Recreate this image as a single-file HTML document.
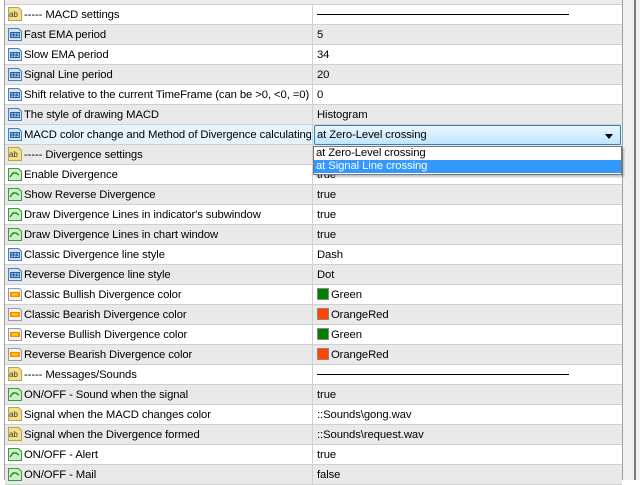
<!DOCTYPE html>
<html><head><style>
*{margin:0;padding:0;box-sizing:border-box}
body{width:640px;height:480px;overflow:hidden;background:#fff;font-family:"Liberation Sans",sans-serif;font-size:11.3px;letter-spacing:-0.1px;color:#000;position:relative}
#tbl{position:absolute;left:4px;top:0;width:618px;height:480px;border-left:1px solid #a0a0a0}
.top{height:5px;background:#ececec;border-bottom:1px solid #d0d0d0}
.r{position:relative;height:20px;border-bottom:1px solid #d0d0d0;background:#fff;line-height:19px}
.r.g{background:#e9e9e9}
.r .l{position:absolute;left:19px;top:1px;white-space:nowrap;width:287px;overflow:hidden}
.r .v{position:absolute;left:307px;top:0;bottom:0;right:0;border-left:1px solid #d0d0d0;padding:1px 0 0 4px;white-space:nowrap}
.ic{position:absolute;left:2px;top:1px;width:16px;height:16px;display:block}
.sep{position:absolute;left:4px;top:9px;width:252px;height:1px;background:#000}
.sw{display:inline-block;width:12px;height:12px;border:1px solid #888;vertical-align:-2px;margin-right:2px}
#sb1{position:absolute;left:622px;top:0;width:12px;height:480px;background:#f0f0f0;border-left:1px solid #a0a0a0}
#sb2{position:absolute;left:634px;top:0;width:6px;height:480px;background:#f0f0f0;border-left:2px solid #7a7a7a}
#combo{position:absolute;left:314px;top:125px;width:307px;height:20px;border:1px solid #3c7fb1;border-radius:2px;background:linear-gradient(#eaf6fd,#bee6fd);padding:0 0 0 2px;line-height:18px}
#combo:after{content:"";position:absolute;right:7px;top:8px;border:4px solid transparent;border-top:5px solid #000;border-bottom:0}
#dd{position:absolute;left:313px;top:146px;width:309px;height:29px;background:#fff;border:1px solid #777;box-shadow:2px 2px 2px rgba(0,0,0,.25)}
#dd div{height:13px;line-height:13px;padding-left:2px}
#dd .s{background:#3399ff;color:#fff}
</style></head><body>
<svg width="0" height="0" style="position:absolute">
<defs>
<g id="ab"><path d="M1.5 1.5h10l3 3v10h-13z" fill="#f3e08c" stroke="#b8a24a"/><text x="2" y="11" font-size="8" font-family="Liberation Sans" fill="#333">ab</text></g>
<g id="n"><path d="M1.5 2.5h10l3 3v9h-13z" fill="#cfe3f7" stroke="#4a7fb8"/><rect x="3" y="6" width="10" height="6" fill="#2c5fa0"/><text x="3.5" y="11" font-size="5.5" font-family="Liberation Sans" fill="#fff">123</text></g>
<g id="b"><path d="M1.5 2.5h10l3 3v9h-13z" fill="#c9efc4" stroke="#3c9a3c"/><path d="M3 11l3-4h3l3 2" stroke="#1d6d1d" fill="none" stroke-width="1.2"/></g>
<g id="c"><path d="M1.5 2.5h11l2 2v10h-13z" fill="#f4f4f4" stroke="#999"/><rect x="3" y="6" width="10" height="5" fill="#ff8a00"/><rect x="5" y="7.5" width="6" height="2" fill="#ffe000"/></g>
</defs></svg>
<div id="tbl">
<div class="top"></div>
<div class="r"><svg class="ic"><use href="#ab"/></svg><span class="l">----- MACD settings</span><div class="v"><div class="sep"></div></div></div>
<div class="r g"><svg class="ic"><use href="#n"/></svg><span class="l">Fast EMA period</span><div class="v">5</div></div>
<div class="r"><svg class="ic"><use href="#n"/></svg><span class="l">Slow EMA period</span><div class="v">34</div></div>
<div class="r g"><svg class="ic"><use href="#n"/></svg><span class="l">Signal Line period</span><div class="v">20</div></div>
<div class="r"><svg class="ic"><use href="#n"/></svg><span class="l">Shift relative to the current TimeFrame (can be &gt;0, &lt;0, =0)</span><div class="v">0</div></div>
<div class="r g"><svg class="ic"><use href="#n"/></svg><span class="l">The style of drawing MACD</span><div class="v">Histogram</div></div>
<div class="r" style="background:#e5f3fb"><svg class="ic"><use href="#n"/></svg><span class="l">MACD color change and Method of Divergence calculating</span><div class="v"></div></div>
<div class="r g"><svg class="ic"><use href="#ab"/></svg><span class="l">----- Divergence settings</span><div class="v"></div></div>
<div class="r"><svg class="ic"><use href="#b"/></svg><span class="l">Enable Divergence</span><div class="v">true</div></div>
<div class="r g"><svg class="ic"><use href="#b"/></svg><span class="l">Show Reverse Divergence</span><div class="v">true</div></div>
<div class="r"><svg class="ic"><use href="#b"/></svg><span class="l">Draw Divergence Lines in indicator's subwindow</span><div class="v">true</div></div>
<div class="r g"><svg class="ic"><use href="#b"/></svg><span class="l">Draw Divergence Lines in chart window</span><div class="v">true</div></div>
<div class="r"><svg class="ic"><use href="#n"/></svg><span class="l">Classic Divergence line style</span><div class="v">Dash</div></div>
<div class="r g"><svg class="ic"><use href="#n"/></svg><span class="l">Reverse Divergence line style</span><div class="v">Dot</div></div>
<div class="r"><svg class="ic"><use href="#c"/></svg><span class="l">Classic Bullish Divergence color</span><div class="v"><span class="sw" style="background:#008000"></span>Green</div></div>
<div class="r g"><svg class="ic"><use href="#c"/></svg><span class="l">Classic Bearish Divergence color</span><div class="v"><span class="sw" style="background:#ff4500"></span>OrangeRed</div></div>
<div class="r"><svg class="ic"><use href="#c"/></svg><span class="l">Reverse Bullish Divergence color</span><div class="v"><span class="sw" style="background:#008000"></span>Green</div></div>
<div class="r g"><svg class="ic"><use href="#c"/></svg><span class="l">Reverse Bearish Divergence color</span><div class="v"><span class="sw" style="background:#ff4500"></span>OrangeRed</div></div>
<div class="r"><svg class="ic"><use href="#ab"/></svg><span class="l">----- Messages/Sounds</span><div class="v"><div class="sep"></div></div></div>
<div class="r g"><svg class="ic"><use href="#b"/></svg><span class="l">ON/OFF - Sound when the signal</span><div class="v">true</div></div>
<div class="r"><svg class="ic"><use href="#ab"/></svg><span class="l">Signal when the MACD changes color</span><div class="v">::Sounds\gong.wav</div></div>
<div class="r g"><svg class="ic"><use href="#ab"/></svg><span class="l">Signal when the Divergence formed</span><div class="v">::Sounds\request.wav</div></div>
<div class="r"><svg class="ic"><use href="#b"/></svg><span class="l">ON/OFF - Alert</span><div class="v">true</div></div>
<div class="r g"><svg class="ic"><use href="#b"/></svg><span class="l">ON/OFF - Mail</span><div class="v">false</div></div>
</div>
<div id="sb1"></div><div id="sb2"></div>
<div id="combo">at Zero-Level crossing</div>
<div id="dd"><div>at Zero-Level crossing</div><div class="s">at Signal Line crossing</div></div>
</body></html>
